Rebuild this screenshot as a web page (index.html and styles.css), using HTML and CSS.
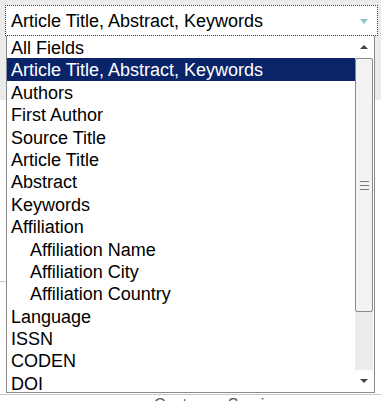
FILE: index.html
```html
<!DOCTYPE html>
<html lang="en">
<head>
    <meta charset="UTF-8">
    <meta name="viewport" content="width=device-width, initial-scale=1.0">
    <title>Search Field</title>
    <link rel="stylesheet" href="styles.css">
</head>
<body>
    <div id="page">
        <div class="band"></div>
        <div class="content">
            <div class="rule rule-mid"></div>
            <div class="rule rule-low"></div>
            <div class="footer-link">Customer Service</div>
        </div>
    </div>

    <div id="field-select">
        <span>Article Title, Abstract, Keywords</span>
        <span class="caret"></span>
    </div>

    <div id="field-list">
        <ul class="options">
            <li>All Fields</li>
            <li class="selected">Article Title, Abstract, Keywords</li>
            <li>Authors</li>
            <li>First Author</li>
            <li>Source Title</li>
            <li>Article Title</li>
            <li>Abstract</li>
            <li>Keywords</li>
            <li>Affiliation</li>
            <li class="sub">Affiliation Name</li>
            <li class="sub">Affiliation City</li>
            <li class="sub">Affiliation Country</li>
            <li>Language</li>
            <li>ISSN</li>
            <li>CODEN</li>
            <li>DOI</li>
        </ul>
        <div class="scrollbar">
            <div class="arrow up"></div>
            <div class="track">
                <div class="thumb"><span class="grip"></span></div>
            </div>
            <div class="arrow down"></div>
        </div>
    </div>
</body>
</html>
```

FILE: styles.css
```css
body {
    margin: 0;
    font-family: 'Liberation Sans', Arial, sans-serif;
    background: #fff;
    color: #000;
}
#page {
    width: 381px;
    height: 401px;
    overflow: hidden;
}
.band {
    height: 100px;
    background: #ebebeb;
}
.content {
    position: relative;
    height: 301px;
}
.rule {
    border-top: 1px solid #c8c8c8;
}
.rule-mid {
    margin-top: 181px;
    width: 40px;
}
.rule-low {
    margin-top: 112px;
}
.footer-link {
    margin-top: 1px;
    padding-left: 154px;
    font-size: 16px;
    line-height: 18px;
    color: #555;
}
#field-select {
    position: absolute;
    left: 5px;
    top: 5px;
    width: 366px;
    height: 28px;
    border: 1px dotted #333;
    background: #fff;
    display: flex;
    align-items: center;
    justify-content: space-between;
    padding-left: 5px;
    padding-top: 1px;
    font-size: 18px;
}
.caret {
    width: 0;
    height: 0;
    border-left: 4px solid transparent;
    border-right: 4px solid transparent;
    border-top: 5px solid #8fc4c4;
    margin-right: 9px;
    margin-top: 1px;
}
#field-list {
    position: absolute;
    left: 6px;
    top: 36px;
    width: 367px;
    height: 356px;
    border: 1px solid #8a8a8a;
    border-top: none;
    background: #fff;
    display: flex;
    overflow: hidden;
}
.options {
    list-style: none;
    margin: 0;
    padding: 0;
    flex: 1;
    font-size: 18px;
}
.options li {
    height: 22.4px;
    line-height: 24px;
    padding-left: 4px;
    white-space: nowrap;
}
.options li.selected {
    background: #0a246a;
    color: #fff;
}
.options li.sub {
    padding-left: 23px;
}
.scrollbar {
    width: 18px;
    margin-right: 1px;
    display: flex;
    flex-direction: column;
}
.arrow {
    height: 22px;
    display: flex;
    align-items: center;
    justify-content: center;
}
.arrow::after {
    content: "";
    border-left: 4px solid transparent;
    border-right: 4px solid transparent;
}
.arrow.up::after {
    border-bottom: 4px solid #444;
}
.arrow.down::after {
    border-top: 4px solid #444;
}
.track {
    flex: 1;
    background: #ececec;
    display: flex;
    flex-direction: column;
}
.thumb {
    height: 252px;
    border: 1px solid #8a8a8a;
    border-radius: 2px;
    background: #f3f3f3;
    display: flex;
    align-items: center;
    justify-content: center;
}
.grip {
    width: 9px;
    height: 7px;
    border-top: 1px solid #777;
    border-bottom: 1px solid #777;
    background: linear-gradient(#777, #777) center / 100% 1px no-repeat;
}
```
